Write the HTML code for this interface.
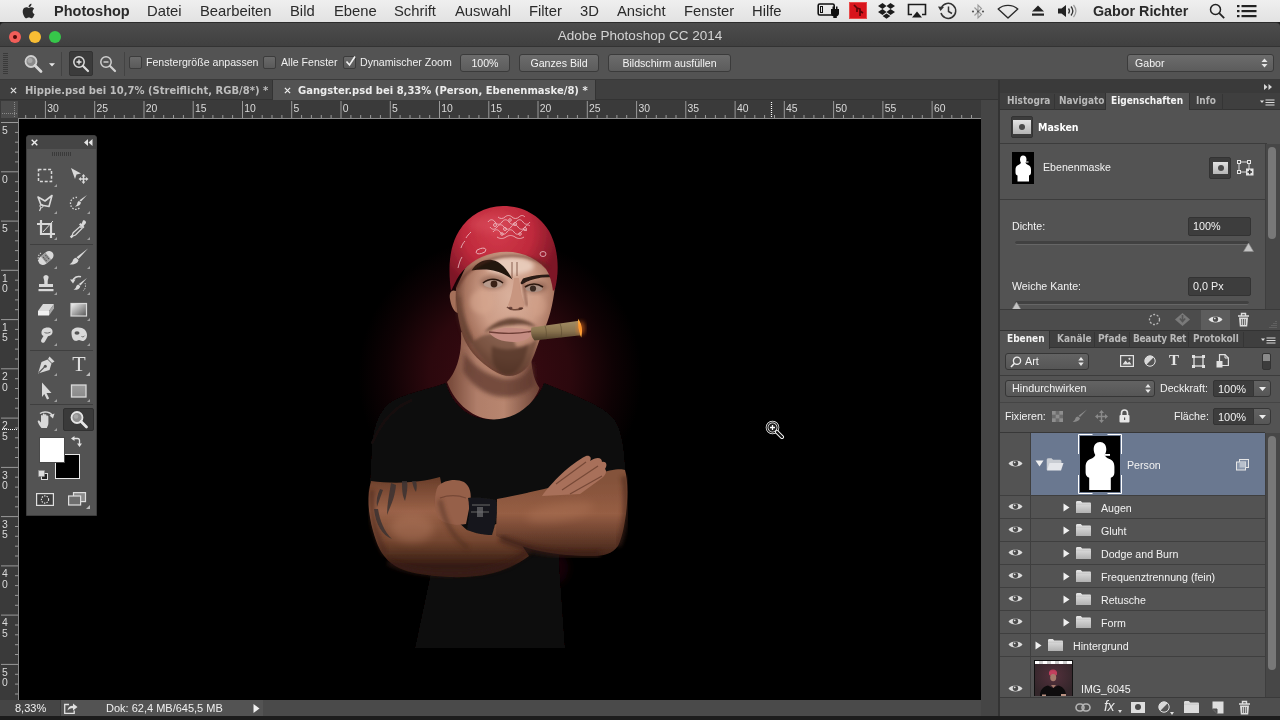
<!DOCTYPE html>
<html lang="de">
<head>
<meta charset="utf-8">
<title>Adobe Photoshop CC 2014</title>
<style>
*{box-sizing:border-box;margin:0;padding:0}
html,body{width:1280px;height:720px;overflow:hidden;background:#1b1b1b;font-family:"Liberation Sans","DejaVu Sans",sans-serif;color:#e6e6e6}
.abs{position:absolute}
#menubar,#titlebar,#optbar,#tabbar,#rulerT,#rulerL,#canvas,#status,#pcol{will-change:transform;transform:translateZ(0)}
#menubar{left:0;top:0;width:1280px;height:22px;background:linear-gradient(#efefef,#e2e2e2);color:#2a2a2a;font-size:14.8px;line-height:22px;white-space:nowrap}
#menubar span{position:absolute;top:0}
#titlebar{left:0;top:22px;width:1280px;height:25px;background:linear-gradient(#4c4c4c,#404040);border-top:1px solid #2c2c2c;border-bottom:1px solid #333;text-align:center;font-size:13.5px;line-height:26px;color:#d4d4d4;border-radius:4px 4px 0 0}
#optbar{left:0;top:47px;width:1280px;height:33px;background:#535353;border-bottom:1px solid #3a3a3a;font-size:10.6px;color:#f0f0f0}
#tabbar{left:0;top:80px;width:998px;height:20px;background:#3f3f3f;font-size:10px;font-weight:bold;font-family:"DejaVu Sans","Liberation Sans",sans-serif;color:#bdbdbd;white-space:nowrap}
#rulerT{left:0;top:100px;width:981px;height:19px;background:#3a3a3a}
#rulerL{left:0;top:119px;width:19px;height:581px;background:#3a3a3a}
#canvas{left:19px;top:119px;width:962px;height:581px;background:#000;overflow:hidden}
#vscroll{left:981px;top:100px;width:17px;height:616px;background:#454545}
#status{left:0;top:700px;width:981px;height:16px;background:#535353;font-size:11px;line-height:16px;color:#f0f0f0}
#pcol{left:998px;top:80px;width:282px;height:636px;background:#535353;border-left:2px solid #333}
#bottom{left:0;top:716px;width:1280px;height:4px;background:#1c1c1c}
.btn{position:absolute;height:18px;top:7px;border:1px solid #3b3b3b;border-radius:3px;background:linear-gradient(#6c6c6c,#5c5c5c);text-align:center;line-height:16px;font-size:10.6px;color:#f4f4f4}
.chk{position:absolute;top:9px;width:13px;height:13px;border:1px solid #3c3c3c;border-radius:2px;background:linear-gradient(#6a6a6a,#5a5a5a)}
.lbl{position:absolute;top:8px;line-height:15px;white-space:nowrap}

#pcol .tabs{position:absolute;left:0;width:280px;height:18px;background:#3f3f3f;border-bottom:1px solid #333;font:bold 10px "DejaVu Sans Condensed","DejaVu Sans","Liberation Sans",sans-serif;color:#b9b9b9;white-space:nowrap}
#pcol .tabs span{position:absolute;top:0;line-height:16px}
#pcol .tabs .act{position:absolute;top:0;height:18px;background:#535353;border-left:1px solid #333;border-right:1px solid #333}
#pcol .t{position:absolute;font-size:10.65px;line-height:13px;color:#f2f2f2;white-space:nowrap}
#pcol .fld{position:absolute;background:#3d3d3d;border:1px solid #333;border-radius:2px;font-size:10.8px;color:#f2f2f2;padding-left:4px;white-space:nowrap}
#pcol .hl{position:absolute;left:0;height:1px;background:#3c3c3c}
#pcol .dd{position:absolute;border:1px solid #363636;border-radius:3px;background:linear-gradient(#636363,#565656);font-size:10.8px;color:#f2f2f2;white-space:nowrap}
</style>
</head>
<body>
<svg width="0" height="0" style="position:absolute"><defs><linearGradient id="fg" x1="0" y1="0" x2="0" y2="1"><stop offset="0" stop-color="#e6e6e6"/><stop offset="1" stop-color="#b2b2b2"/></linearGradient></defs></svg>
<div id="menubar" class="abs">
<svg class="abs" style="left:20px;top:2px" width="18" height="18" viewBox="0 0 18 18"><path fill="#2b2b2b" d="M12.6 9.6c0-1.9 1.5-2.8 1.6-2.9-.9-1.3-2.2-1.4-2.7-1.5-1.2-.1-2.2.7-2.8.7-.6 0-1.5-.7-2.4-.6-1.200.1-2.400.7-3 1.800-1.300 2.200-.3 5.500.9 7.300.6.9 1.300 1.900 2.300 1.800.900 0 1.300-.6 2.400-.6 1.100 0 1.400.6 2.400.6 1 0 1.600-.9 2.200-1.800.7-1 1-2 1-2.100-.1 0-1.900-.7-1.900-2.700zM10.800 4c.5-.6.800-1.500.7-2.300-.7 0-1.600.5-2.100 1.100-.5.500-.9 1.400-.8 2.200.800.1 1.700-.4 2.200-1z"/></svg>
<span style="left:54px;font-weight:bold;font-size:14.5px">Photoshop</span>
<span style="left:147px">Datei</span><span style="left:200px">Bearbeiten</span><span style="left:290px">Bild</span><span style="left:334px">Ebene</span><span style="left:394px">Schrift</span><span style="left:455px">Auswahl</span><span style="left:529px">Filter</span><span style="left:580px">3D</span><span style="left:617px">Ansicht</span><span style="left:684px">Fenster</span><span style="left:752px">Hilfe</span>
<svg class="abs" style="left:817px;top:2px" width="24" height="18" viewBox="0 0 24 18"><rect x="1.200" y="2" width="16" height="11" rx="1.500" fill="none" stroke="#111" stroke-width="1.600"/><rect x="3.500" y="4.500" width="2" height="6" fill="none" stroke="#111" stroke-width="1"/><path fill="#111" d="M14 7h1.500V4.500h1.500V7h2V4.500h1.500V7H22v4.500c0 1.500-1 2.500-2.200 2.800V16h-3.500v-1.700C15 14 14 13 14 11.500z"/></svg>
<div class="abs" style="left:849px;top:2px;width:18px;height:17px;background:#d8141c;border:1px solid #e84a4a"></div>
<svg class="abs" style="left:849px;top:2px" width="18" height="17" viewBox="0 0 18 17"><path d="M5 3l3 3v4M8 6l3 1v7M11 9l3 2" stroke="#5c0508" stroke-width="1.700" fill="none"/></svg>
<svg class="abs" style="left:877px;top:2px" width="19" height="18" viewBox="0 0 19 18"><path fill="#1c1c1c" d="M5.500 1L1 4l4.500 3L9.500 4zM13.500 1L9.500 4l4 3L18 4zM1 10l4.500 3 4-3-4-3zM13.500 7l-4 3 4 3L18 10zM5.600 14l3.900 2.700 3.900-2.700-3.900-2.600z"/></svg>
<svg class="abs" style="left:907px;top:3px" width="20" height="16" viewBox="0 0 20 16"><path d="M5 11.500H1.500V1.500h17v10H15" fill="none" stroke="#1c1c1c" stroke-width="1.600"/><path d="M10 8.500l5 6H5z" fill="#1c1c1c"/></svg>
<svg class="abs" style="left:937px;top:1px" width="21" height="20" viewBox="0 0 21 20"><path d="M4.500 6.500A7.500 7.500 0 1 1 4 12" fill="none" stroke="#333" stroke-width="1.500"/><path d="M1 5.500l6 .5-3.500 4z" fill="#333"/><path d="M11.500 5.500v5l3.500 2" fill="none" stroke="#333" stroke-width="1.500"/></svg>
<svg class="abs" style="left:971px;top:3px" width="14" height="17" viewBox="0 0 14 17"><path d="M3.500 4.500l7 7-3.500 3.500V2l3.500 3.500-7 7" fill="none" stroke="#9a9a9a" stroke-width="1.100"/><circle cx="2" cy="8.500" r="1.100" fill="#555"/><circle cx="12" cy="8.500" r="1.100" fill="#555"/><circle cx="7" cy="8.500" r="1" fill="#555"/></svg>
<svg class="abs" style="left:997px;top:4px" width="22" height="15" viewBox="0 0 22 15"><path d="M1.200 5C6.500.2 15.500.2 20.800 5L11 14z" fill="none" stroke="#2a2a2a" stroke-width="1.400" stroke-linejoin="round"/></svg>
<svg class="abs" style="left:1031px;top:5px" width="14" height="12" viewBox="0 0 14 12"><path d="M7 .5l6 6H1z" fill="#222"/><rect x="1" y="8.500" width="12" height="2.200" fill="#222"/></svg>
<svg class="abs" style="left:1057px;top:4px" width="20" height="14" viewBox="0 0 20 14"><path d="M1 4.500h3.500L9 1v12L4.500 9.500H1z" fill="#222"/><path d="M11.500 4.500c1.200 1.500 1.200 3.500 0 5M14 2.500c2.200 2.700 2.200 6.300 0 9" fill="none" stroke="#333" stroke-width="1.300"/><path d="M16.500 1c3 3.700 3 8.300 0 12" fill="none" stroke="#999" stroke-width="1.200"/></svg>
<span style="left:1093px;font-weight:bold;font-size:14.300px">Gabor Richter</span>
<svg class="abs" style="left:1209px;top:3px" width="17" height="17" viewBox="0 0 17 17"><circle cx="6.500" cy="6.500" r="5" fill="none" stroke="#222" stroke-width="1.500"/><path d="M10.200 10.200l5 5" stroke="#222" stroke-width="1.800"/></svg>
<svg class="abs" style="left:1237px;top:5px" width="20" height="13" viewBox="0 0 20 13"><g fill="#222"><rect x="0" y="0" width="2.500" height="2.200"/><rect x="4.500" y="0" width="15" height="2.200"/><rect x="0" y="5" width="2.500" height="2.200"/><rect x="4.500" y="5" width="15" height="2.200"/><rect x="0" y="10" width="2.500" height="2.200"/><rect x="4.500" y="10" width="15" height="2.200"/></g></svg>
</div>
<div id="titlebar" class="abs">Adobe Photoshop CC 2014
<i class="abs" style="left:9px;top:8px;width:12px;height:12px;border-radius:6px;background:#f25e59"></i><i class="abs" style="left:13px;top:12px;width:4px;height:4px;border-radius:2px;background:#4a0a08"></i>
<i class="abs" style="left:29px;top:8px;width:12px;height:12px;border-radius:6px;background:#f8bd34"></i>
<i class="abs" style="left:49px;top:8px;width:12px;height:12px;border-radius:6px;background:#36c64a"></i>
</div>
<div id="optbar" class="abs">
<svg class="abs" style="left:3px;top:6px" width="6" height="22" viewBox="0 0 6 22"><g fill="#3a3a3a"><rect x="0" y="0" width="5" height="1"/><rect x="0" y="2" width="5" height="1"/><rect x="0" y="4" width="5" height="1"/><rect x="0" y="6" width="5" height="1"/><rect x="0" y="8" width="5" height="1"/><rect x="0" y="10" width="5" height="1"/><rect x="0" y="12" width="5" height="1"/><rect x="0" y="14" width="5" height="1"/><rect x="0" y="16" width="5" height="1"/><rect x="0" y="18" width="5" height="1"/><rect x="0" y="20" width="5" height="1"/></g></svg>
<svg class="abs" style="left:23px;top:7px" width="22" height="20" viewBox="0 0 22 20"><circle cx="8" cy="7.500" r="5.500" fill="#8a8a8a" stroke="#d0d0d0" stroke-width="1.800"/><circle cx="7" cy="6.500" r="2.500" fill="#a8a8a8"/><path d="M12 11.500l6 6" stroke="#d8d8d8" stroke-width="2.800" stroke-linecap="round"/></svg>
<svg class="abs" style="left:49px;top:16px" width="6" height="4" viewBox="0 0 8 5"><path d="M0 0h8L4 4.500z" fill="#e8e8e8"/></svg>
<i class="abs" style="left:61px;top:5px;width:1px;height:24px;background:#434343"></i>
<i class="abs" style="left:69px;top:4px;width:24px;height:25px;background:#3b3b3b;border-radius:2px;border:1px solid #333"></i>
<svg class="abs" style="left:72px;top:8px" width="18" height="18" viewBox="0 0 18 18"><circle cx="7" cy="7" r="5.200" fill="none" stroke="#dcdcdc" stroke-width="1.500"/><path d="M4.500 7h5M7 4.500v5" stroke="#e8e8e8" stroke-width="1.300"/><path d="M11 11l5 5" stroke="#dcdcdc" stroke-width="2.200" stroke-linecap="round"/></svg>
<svg class="abs" style="left:99px;top:8px" width="18" height="18" viewBox="0 0 18 18"><circle cx="7" cy="7" r="5.200" fill="none" stroke="#d0d0d0" stroke-width="1.500"/><path d="M4.500 7h5" stroke="#e0e0e0" stroke-width="1.300"/><path d="M11 11l5 5" stroke="#d0d0d0" stroke-width="2.200" stroke-linecap="round"/></svg>
<i class="abs" style="left:124px;top:5px;width:1px;height:24px;background:#434343"></i>
<i class="chk" style="left:129px"></i><span class="lbl" style="left:146px">Fenstergröße anpassen</span>
<i class="chk" style="left:263px"></i><span class="lbl" style="left:281px">Alle Fenster</span>
<i class="chk" style="left:343px"></i><svg class="abs" style="left:344px;top:8px" width="13" height="13" viewBox="0 0 13 13"><path d="M2.500 6.500l3 3.500L11 1.500" fill="none" stroke="#f2f2f2" stroke-width="1.600"/></svg><span class="lbl" style="left:360px">Dynamischer Zoom</span>
<div class="btn" style="left:460px;width:50px">100%</div>
<div class="btn" style="left:519px;width:80px">Ganzes Bild</div>
<div class="btn" style="left:608px;width:123px">Bildschirm ausfüllen</div>
<div class="btn" style="left:1127px;width:147px;text-align:left;padding-left:7px">Gabor</div>
<svg class="abs" style="left:1261px;top:11px" width="7" height="10" viewBox="0 0 7 10"><path d="M0.500 4L3.500 0.500 6.500 4zM0.500 6L3.500 9.500 6.500 6z" fill="#e6e6e6"/></svg>
</div>
<div id="tabbar" class="abs">
<i class="abs" style="left:272px;top:0;width:324px;height:20px;background:#535353;border-left:1px solid #333;border-right:1px solid #333"></i>
<i class="abs" style="left:0;top:19px;width:272px;height:1px;background:#333"></i><i class="abs" style="left:596px;top:19px;width:402px;height:1px;background:#333"></i>
<svg class="abs" style="left:10px;top:7px" width="7" height="7" viewBox="0 0 8 8"><path d="M1 1l6 6M7 1L1 7" stroke="#e0e0e0" stroke-width="1.400"/></svg>
<span class="abs" style="left:25px;top:1px;line-height:20px">Hippie.psd bei 10,7% (Streiflicht, RGB/8*) *</span>
<svg class="abs" style="left:284px;top:7px" width="7" height="7" viewBox="0 0 8 8"><path d="M1 1l6 6M7 1L1 7" stroke="#f0f0f0" stroke-width="1.400"/></svg>
<span class="abs" style="left:298px;top:1px;line-height:20px;color:#ececec">Gangster.psd bei 8,33% (Person, Ebenenmaske/8) *</span>
</div>
<div id="rulerT" class="abs"><svg class="abs" style="left:0;top:0" width="981" height="19" viewBox="0 0 981 19" font-family="Liberation Sans, sans-serif" font-size="10.400" fill="#dadada"><rect x="1" y="1" width="17" height="17" fill="#4d4d4d"/><path d="M14.500 2v16M2 13.500h16" stroke="#8a8a8a" stroke-width="1" stroke-dasharray="1 1"/><text x="47.2" y="12">30</text><text x="96.5" y="12">25</text><text x="145.8" y="12">20</text><text x="195.0" y="12">15</text><text x="244.3" y="12">10</text><text x="293.5" y="12">5</text><text x="342.8" y="12">0</text><text x="392.1" y="12">5</text><text x="441.3" y="12">10</text><text x="490.6" y="12">15</text><text x="539.8" y="12">20</text><text x="589.1" y="12">25</text><text x="638.4" y="12">30</text><text x="687.6" y="12">35</text><text x="736.9" y="12">40</text><text x="786.1" y="12">45</text><text x="835.4" y="12">50</text><text x="884.7" y="12">55</text><text x="933.9" y="12">60</text><path d="M25.7 15V18M35.6 15V18M45.4 1V18M55.3 15V18M65.1 15V18M75.0 15V18M84.8 15V18M94.7 1V18M104.6 15V18M114.4 15V18M124.3 15V18M134.1 15V18M144.0 1V18M153.8 15V18M163.7 15V18M173.5 15V18M183.4 15V18M193.2 1V18M203.1 15V18M212.9 15V18M222.8 15V18M232.6 15V18M242.5 1V18M252.3 15V18M262.2 15V18M272.0 15V18M281.9 15V18M291.7 1V18M301.6 15V18M311.4 15V18M321.3 15V18M331.1 15V18M341.0 1V18M350.9 15V18M360.7 15V18M370.6 15V18M380.4 15V18M390.3 1V18M400.1 15V18M410.0 15V18M419.8 15V18M429.7 15V18M439.5 1V18M449.4 15V18M459.2 15V18M469.1 15V18M478.9 15V18M488.8 1V18M498.6 15V18M508.5 15V18M518.3 15V18M528.2 15V18M538.0 1V18M547.9 15V18M557.7 15V18M567.6 15V18M577.4 15V18M587.3 1V18M597.2 15V18M607.0 15V18M616.9 15V18M626.7 15V18M636.6 1V18M646.4 15V18M656.3 15V18M666.1 15V18M676.0 15V18M685.8 1V18M695.7 15V18M705.5 15V18M715.4 15V18M725.2 15V18M735.1 1V18M744.9 15V18M754.8 15V18M764.6 15V18M774.5 15V18M784.3 1V18M794.2 15V18M804.0 15V18M813.9 15V18M823.7 15V18M833.6 1V18M843.5 15V18M853.3 15V18M863.2 15V18M873.0 15V18M882.9 1V18M892.7 15V18M902.6 15V18M912.4 15V18M922.3 15V18M932.1 1V18M942.0 15V18M951.8 15V18M961.7 15V18M971.5 15V18" stroke="#9a9a9a" stroke-width="1" fill="none"/><rect x="18" y="18" width="963" height="1" fill="#8a8a8a"/><path d="M771.500 2V18" stroke="#fff" stroke-width="1.200" stroke-dasharray="1 1"/></svg></div>
<div id="rulerL" class="abs"><svg class="abs" style="left:0;top:0" width="19" height="581" viewBox="0 0 19 581" font-family="Liberation Sans, sans-serif" font-size="10.400" fill="#dadada"><text x="2" y="14.8">5</text><text x="2" y="64.1">0</text><text x="2" y="113.4">5</text><text x="2" y="162.6">1</text><text x="2" y="173.1">0</text><text x="2" y="211.9">1</text><text x="2" y="222.4">5</text><text x="2" y="261.1">2</text><text x="2" y="271.6">0</text><text x="2" y="310.4">2</text><text x="2" y="320.9">5</text><text x="2" y="359.7">3</text><text x="2" y="370.2">0</text><text x="2" y="408.9">3</text><text x="2" y="419.4">5</text><text x="2" y="458.2">4</text><text x="2" y="468.7">0</text><text x="2" y="507.4">4</text><text x="2" y="517.9">5</text><text x="2" y="556.7">5</text><text x="2" y="567.2">0</text><path d="M1 3.5H19M15 13.4H19M15 23.2H19M15 33.1H19M15 42.9H19M1 52.8H19M15 62.7H19M15 72.5H19M15 82.4H19M15 92.2H19M1 102.1H19M15 111.9H19M15 121.8H19M15 131.6H19M15 141.5H19M1 151.3H19M15 161.2H19M15 171.0H19M15 180.9H19M15 190.7H19M1 200.6H19M15 210.4H19M15 220.3H19M15 230.1H19M15 240.0H19M1 249.8H19M15 259.7H19M15 269.5H19M15 279.4H19M15 289.2H19M1 299.1H19M15 309.0H19M15 318.8H19M15 328.7H19M15 338.5H19M1 348.4H19M15 358.2H19M15 368.1H19M15 377.9H19M15 387.8H19M1 397.6H19M15 407.5H19M15 417.3H19M15 427.2H19M15 437.0H19M1 446.9H19M15 456.7H19M15 466.6H19M15 476.4H19M15 486.3H19M1 496.1H19M15 506.0H19M15 515.8H19M15 525.7H19M15 535.5H19M1 545.4H19M15 555.3H19M15 565.1H19M15 575.0H19" stroke="#9a9a9a" stroke-width="1" fill="none"/><rect x="18" y="0" width="1" height="581" fill="#8a8a8a"/><path d="M2 310.5H18" stroke="#fff" stroke-width="1.200" stroke-dasharray="1 1"/></svg></div>
<div id="canvas" class="abs"><div class="abs" style="left:0;top:-1px;width:962px;height:582px">
<!--FIGSTART--><svg class="abs" style="left:0;top:0" width="962" height="582" viewBox="19 118 962 582">
<defs>
<radialGradient id="glow" gradientUnits="userSpaceOnUse" cx="500" cy="376" r="142" gradientTransform="translate(500 376) scale(1 .98) translate(-500 -376)"><stop offset="0" stop-color="#3c0b13"/><stop offset=".5" stop-color="#2b080d"/><stop offset=".8" stop-color="#0e0204"/><stop offset="1" stop-color="#000"/></radialGradient>
<radialGradient id="band" gradientUnits="userSpaceOnUse" cx="498" cy="232" r="62"><stop offset="0" stop-color="#d23a4b"/><stop offset=".55" stop-color="#bf2a3c"/><stop offset="1" stop-color="#7d1626"/></radialGradient>
<radialGradient id="face" gradientUnits="userSpaceOnUse" cx="510" cy="296" r="62" gradientTransform="translate(510 296) scale(.9 1.25) translate(-510 -296)"><stop offset="0" stop-color="#d9b09c"/><stop offset=".5" stop-color="#cc9c86"/><stop offset=".8" stop-color="#a87560"/><stop offset="1" stop-color="#6a4032"/></radialGradient>
<linearGradient id="neck" gradientUnits="userSpaceOnUse" x1="450" y1="0" x2="540" y2="0"><stop offset="0" stop-color="#7a4c3c"/><stop offset=".3" stop-color="#b07e6a"/><stop offset=".6" stop-color="#b8866f"/><stop offset="1" stop-color="#6a4034"/></linearGradient>
<linearGradient id="armL" gradientUnits="userSpaceOnUse" x1="0" y1="478" x2="0" y2="565"><stop offset="0" stop-color="#6a3e2a"/><stop offset=".38" stop-color="#9a6248"/><stop offset=".72" stop-color="#744630"/><stop offset="1" stop-color="#361c12"/></linearGradient>
<linearGradient id="armR" gradientUnits="userSpaceOnUse" x1="0" y1="480" x2="0" y2="560"><stop offset="0" stop-color="#84523a"/><stop offset=".42" stop-color="#965e44"/><stop offset="1" stop-color="#3a1e14"/></linearGradient>
<linearGradient id="cig" gradientUnits="userSpaceOnUse" x1="0" y1="322" x2="0" y2="340"><stop offset="0" stop-color="#a08a62"/><stop offset=".5" stop-color="#8a7450"/><stop offset="1" stop-color="#54432c"/></linearGradient>
<filter id="b15" x="-20%" y="-20%" width="140%" height="140%"><feGaussianBlur stdDeviation="1.600"/></filter><filter id="b1" x="-20%" y="-20%" width="140%" height="140%"><feGaussianBlur stdDeviation="1"/></filter>
<filter id="b2" x="-20%" y="-20%" width="140%" height="140%"><feGaussianBlur stdDeviation="2.200"/></filter>
<filter id="b4" x="-30%" y="-30%" width="160%" height="160%"><feGaussianBlur stdDeviation="4"/></filter>
<filter id="b05" x="-10%" y="-10%" width="120%" height="120%"><feGaussianBlur stdDeviation=".6"/></filter>
<clipPath id="bc"><path d="M451 291c-3-22-2-44 8-60 10-16 26-25 44-25 20 0 36 9 46 25 9 16 11 38 6 58l-2 2c-1-8-3-16-7-22-12-14-32-20-52-16-18 4-30 14-37 26-2 4-4 8-6 12z"/></clipPath></defs>
<rect x="19" y="118" width="962" height="582" fill="#000"/>
<ellipse cx="500" cy="376" rx="142" ry="139" fill="url(#glow)"/><ellipse cx="556" cy="568" rx="12" ry="16" fill="#2a060c" opacity=".55" filter="url(#b4)"/>
<!-- shirt -->
<g filter="url(#b05)">
<path d="M446 383c-14 5-36 9-52 17-14 8-20 24-22 44l-2 38c18 4 48 2 70-4l-8 90-17 80h150l-6-85 8-80c18 4 42 6 59 0-1-28-3-52-12-64-10-13-40-24-70-36-6 18-26 34-50 36s-42-14-48-36z" fill="#0b0909"/>
<path d="M372 444c8-20 20-36 40-44" stroke="#141010" stroke-width="3" fill="none"/>
</g>
<!-- neck -->
<g filter="url(#b05)">
<path d="M461 332C462 352 458 370 447 382C455 404 474 419.500 494 419.500C516 419.500 534 404 539.500 388C534 380 532 372 531 356Z" fill="url(#neck)"/>
<path d="M464 352c10 16 28 26 45 27 12 0 20-7 24-18l2 24c-8 8-18 12-30 12-18 0-34-12-42-26z" fill="#5a362a" opacity=".7" filter="url(#b2)"/>
</g>
<!-- left upper arm & forearm -->
<g filter="url(#b05)">
<path d="M371 481c-4 14-3 32 2 50 4 14 8 24 18 32 10 8 22 10 36 12 22 3 44 3 62-1 14-3 28-9 40-18l-22-34-40 8c-12-10-22-24-27-53-20 6-47 7-69 4z" fill="url(#armL)"/>
<path d="M497 499c30-6 68-14 100-25 12-4 24-6 28-4 3 10 3 28 1 44-2 14-4 24-8 32-6 8-14 10-26 10-34 0-68-6-96-20z" fill="url(#armR)"/>
<!-- right hand fingers on bicep -->
<path d="M542 496c10-14 28-32 44-40 4-1 6 2 4 5 6-4 12-4 12 1 4-1 6 3 3 7 2 2 1 6-3 9l-22 16z" fill="#a8705a"/>
<path d="M556 484l30-22M562 490l36-24M570 494l32-18" stroke="#6a3e2e" stroke-width="1.200" fill="none" opacity=".8"/>
<!-- left fist -->
<path d="M438 486c6-6 18-8 26-4 6 4 8 12 6 22l-4 20c-10 2-22 0-28-6-4-10-4-24 0-32z" fill="#96604a"/>
<path d="M440 498c8-3 18-3 26 0" stroke="#6a3e2e" stroke-width="1.200" fill="none" opacity=".7"/>
</g>
<!-- arm shading -->
<path d="M388 562c30 14 84 16 120 2l22-14" stroke="#3a1f16" stroke-width="6" fill="none" opacity=".6" filter="url(#b2)"/><path d="M372 490c-2 20 2 44 14 64" stroke="#4a281c" stroke-width="6" fill="none" opacity=".6" filter="url(#b2)"/><path d="M624 476c4 24 2 50-6 70" stroke="#4a281c" stroke-width="6" fill="none" opacity=".6" filter="url(#b2)"/>
<path d="M500 538c30 14 66 18 100 16" stroke="#3a1f16" stroke-width="7" fill="none" opacity=".65" filter="url(#b2)"/>
<path d="M440 500c4 22 14 38 28 48" stroke="#4a2a1e" stroke-width="4" fill="none" opacity=".6" filter="url(#b2)"/>
<ellipse cx="412" cy="528" rx="22" ry="14" fill="#b47a5e" opacity=".45" filter="url(#b4)"/><ellipse cx="560" cy="512" rx="34" ry="9" fill="#b07658" opacity=".4" filter="url(#b4)" transform="rotate(-10 560 512)"/>
<!-- tattoo -->
<g fill="#3a3230" opacity=".85" filter="url(#b05)" transform="translate(0 9)">
<path d="M391 474c-2 12-4 22-4 32 4-10 8-18 9-30z"/><path d="M402 472c0 8 0 14 3 20 2-8 3-14 2-20z"/><path d="M412 472c1 5 2 8 4 11 1-4 1-8 0-11z"/><path d="M380 480c-3 6-4 12-3 18 2-6 4-12 6-17z"/>
<path d="M374 500c2 16 8 26 18 30-8-8-12-18-14-30z"/>
</g>
<!-- watch band -->
<g filter="url(#b05)">
<path d="M468 498c8-1 20 0 28 2 2 10 0 24-4 35-8 0-18-2-25-5 2-10 3-22 1-32z" fill="#19181a"/>
<path d="M472 505h18M471 512h18" stroke="#4e4e52" stroke-width="1.500"/><rect x="477" y="507" width="6" height="10" fill="#6c6c70" opacity=".7"/>
</g>
<!-- ear -->
<path d="M456 291c-5-2-7 2-6 8 1 7 4 13 8 14z" fill="#a5705a" filter="url(#b05)"/>
<!-- face -->
<g filter="url(#b05)">
<path d="M456 288C455 300 458 318 461 330C465 345 474 356 484 364C494 372 502 376 509 376C518 376 526 370 531 362C536 352 538 342 543 332C549 320 553 305 555 286L556 262C540 246 500 244 468 262Z" fill="url(#face)"/>
</g>
<!-- forehead highlight -->
<ellipse cx="510" cy="266" rx="24" ry="9" fill="#ecd2c2" opacity=".85" filter="url(#b2)"/>
<ellipse cx="482" cy="302" rx="12" ry="12" fill="#d8a890" opacity=".55" filter="url(#b2)"/>
<ellipse cx="538" cy="306" rx="8" ry="10" fill="#d2a088" opacity=".5" filter="url(#b2)"/>
<!-- beard -->
<g filter="url(#b15)">
<path d="M459 300c1 14 4 26 8 36 6 12 14 22 24 30 8 6 14 9 20 9 8 0 14-5 19-13 4-8 6-16 8-24-6 6-14 9-22 9 0-6-6-10-12-12-10-3-22-1-30 6-6-8-11-22-15-41z" fill="#5c3c2e" opacity=".6"/>
<path d="M484 333c6-8 16-14 28-15 9 0 18 3 25 9-8-2-15-3-23-2-11 0-21 3-30 8z" fill="#5a382a" opacity=".85"/>
<path d="M492 346c6 3 14 4 22 3 6-1 10-2 14-5-1 10-4 18-9 24-4 5-8 7-12 7-5 0-10-4-13-10-2-5-3-12-2-19z" fill="#4a3024" opacity=".6"/>
</g>
<path d="M458 296c1 16 5 32 12 46" stroke="#5a3a2c" stroke-width="6" fill="none" opacity=".45" filter="url(#b2)"/>
<!-- lips -->
<path d="M489 332c8-3 16-5 23-4 8 0 15 1 21 3-1 6-8 11-19 11-12 0-22-4-25-10z" fill="#c48c82" filter="url(#b05)"/>
<path d="M489 332c14 2 30 2 44-1" stroke="#6e3e36" stroke-width="1.400" fill="none" filter="url(#b05)"/>
<!-- nose -->
<path d="M514 278c-1 10-3 20-6 27 2 4 8 6 14 4 3-2 3-6 1-9-2-7-3-15-4-22z" fill="#c89680" filter="url(#b05)"/>
<path d="M507 307c3 3 10 4 16 1" stroke="#5c3428" stroke-width="1.600" fill="none" opacity=".8" filter="url(#b05)"/><ellipse cx="510.500" cy="308" rx="2" ry="1.200" fill="#4a2820" opacity=".7" filter="url(#b05)"/><ellipse cx="520.500" cy="308.500" rx="2" ry="1.200" fill="#4a2820" opacity=".7" filter="url(#b05)"/>
<path d="M523 282c2 8 2 16 4 24" stroke="#7a4a3a" stroke-width="2.500" fill="none" opacity=".6" filter="url(#b1)"/>
<ellipse cx="493" cy="282" rx="13" ry="7" fill="#6a4234" opacity=".45" filter="url(#b2)"/><ellipse cx="535" cy="287" rx="12" ry="6" fill="#6a4234" opacity=".45" filter="url(#b2)"/>
<!-- eyes -->
<g filter="url(#b05)">
<ellipse cx="493" cy="284" rx="9.500" ry="4" fill="#b69a8c"/><circle cx="494" cy="284" r="3.400" fill="#3a2418"/>
<path d="M483 283c6-5 14-5 20 0" stroke="#2a1810" stroke-width="1.600" fill="none"/>
<ellipse cx="534" cy="288.500" rx="8.500" ry="3.600" fill="#a88e82"/><circle cx="533" cy="288.500" r="3.100" fill="#3a2a22"/>
<path d="M525 287c6-4 12-4 18 0" stroke="#2a1810" stroke-width="1.600" fill="none"/>
<!-- brows -->
<path d="M471.500 270.500c5-8 13-11.500 20.500-10.500 8.500 1.200 15 9 20.500 19.500-8-5.500-14.500-8.500-22-9.500-6.500-.8-12.500-.5-19 .5z" fill="#241610"/>
<path d="M522 283c8-5 18-7.500 29-7-8-.5-18 1-27 3.500z" fill="#2a1a12" stroke="#2a1a12" stroke-width="2.600" stroke-linejoin="round"/>
</g>
<path d="M512 262v16M517 262v14" stroke="#7a4c3c" stroke-width="1.200" opacity=".7" filter="url(#b05)"/>
<!-- cigar -->
<g filter="url(#b05)">
<path d="M531.500 327.500l47.500-6.800c2.200 4.200 3 9.500 2 14.500l-46.500 5.300c-3.200-3.500-4.200-8.500-3-13z" fill="url(#cig)"/><path d="M545 325.700c1.500 4 1.800 9 .8 13.500M560 323.500c1.800 4.500 2 9.500 1 14" stroke="#5e4c30" stroke-width="1" fill="none" opacity=".6"/>
<path d="M578.700 320.900c2.500 4.200 3.200 9.500 2.300 14.300-1.700-4.300-2.500-9.600-2.300-14.300z" fill="#ff9a28" stroke="#ffb040" stroke-width="1.300"/>
</g>
<ellipse cx="581" cy="328" rx="4" ry="7" fill="#ff8020" opacity=".5" filter="url(#b2)"/>
<!-- bandana -->
<g filter="url(#b05)">
<path d="M451 291c-3-22-2-44 8-60 10-16 26-25 44-25 20 0 36 9 46 25 9 16 11 38 6 58l-2 2c-1-8-3-16-7-22-12-14-32-20-52-16-18 4-30 14-37 26-2 4-4 8-6 12z" fill="url(#band)"/>
</g>
<path d="M457 288c6-14 18-24 38-30 18-5 40-2 54 10" stroke="#5a2a20" stroke-width="3" fill="none" opacity=".45" filter="url(#b1)"/>
<g clip-path="url(#bc)"><ellipse cx="492" cy="224" rx="24" ry="9" fill="#e05a68" opacity=".4" filter="url(#b4)"/></g>
<!-- bandana paisley -->
<g fill="none" stroke="#f4d4d8" stroke-width=".9" opacity=".8" filter="url(#b05)">
<path d="M488 222c2-3 5-3 7 0s5 3 7 0 5-3 7 0 5 3 7 0 5-3 7 0 5 3 7 0"/><path d="M490 227c2 3 5 3 7 0s5-3 7 0 5 3 7 0 5-3 7 0 5 3 7 0 4-2 5-1"/><path d="M493 232c2-3 5-3 7 0s5 3 7 0 5-3 7 0 5 3 7 0 4-3 6-1"/><path d="M498 217c2 2 5 2 7 0s5-2 7 0 5 2 7 0 4-2 6 0"/><path d="M497 237c3 2 6 2 9 0s6-2 9 0 6 2 9 0"/>
<circle cx="495" cy="225" r="1.500"/><circle cx="505" cy="229" r="1.500"/><circle cx="515" cy="224" r="1.500"/><circle cx="525" cy="229" r="1.500"/><circle cx="510" cy="220" r="1.300"/><circle cx="520" cy="234" r="1.300"/><circle cx="502" cy="234" r="1.300"/>
<ellipse cx="481" cy="251" rx="5" ry="2.500" transform="rotate(-15 481 251)"/><ellipse cx="543" cy="254" rx="3" ry="2.500"/><path d="M458 268c1-4 2-8 4-11M461 248c1-3 2-5 4-7M466 238c1-2 3-4 5-6"/>
</g>
</svg>
<!--FIGEND-->
<div class="abs" style="left:7px;top:17px;width:71px;height:381px;background:#535353;border:1px solid #3d3d3d;border-radius:3px 3px 0 0"></div>
<div class="abs" style="left:8px;top:18px;width:69px;height:13px;background:#454545;border-radius:2px 2px 0 0"></div>
<svg class="abs" style="left:12px;top:21px" width="7" height="7" viewBox="0 0 7 7"><path d="M.7.700l5.600 5.600M6.300.700L.7 6.300" stroke="#eee" stroke-width="1.400"/></svg>
<svg class="abs" style="left:65px;top:21px" width="9" height="7" viewBox="0 0 9 7"><path d="M4 0v7L0 3.500zM8.500 0v7l-4-3.500z" fill="#e4e4e4"/></svg>
<svg class="abs" style="left:33px;top:34px" width="20" height="4" viewBox="0 0 20 4"><path d="M.5 0v4M2.500 0v4M4.500 0v4M6.500 0v4M8.500 0v4M10.500 0v4M12.500 0v4M14.500 0v4M16.500 0v4M18.500 0v4" stroke="#3a3a3a" stroke-width="1"/></svg>
<svg class="abs" style="left:15.5px;top:47.0px" width="22" height="22" viewBox="0 0 22 22"><rect x="3.500" y="4.500" width="13" height="12" fill="none" stroke="#d9d9d9" stroke-width="1.500" stroke-dasharray="3 1.800"/><path d="M22 19V22H19z" fill="#a0a0a0"/></svg>
<svg class="abs" style="left:49.0px;top:47.0px" width="22" height="22" viewBox="0 0 22 22"><path d="M3 3l10 5.500-4.500 1L7 14z" fill="#d9d9d9"/><path d="M15.500 9l2 2.500h-1.300v1.800h1.800V12l2.500 2-2.500 2v-1.300h-1.800v1.800h1.300l-2 2.500-2-2.500h1.300v-1.800h-1.800V16l-2.500-2 2.500-2v1.300h1.800v-1.800h-1.300z" fill="#d9d9d9"/></svg>
<svg class="abs" style="left:15.5px;top:74.0px" width="22" height="22" viewBox="0 0 22 22"><path d="M3 5l7 4 7-5.500-3 11-8-1.500z" fill="none" stroke="#d9d9d9" stroke-width="1.600" stroke-linejoin="round"/><circle cx="6.500" cy="14" r="1.600" fill="none" stroke="#d9d9d9" stroke-width="1"/><path d="M6 15.500l-1.500 3.500" stroke="#d9d9d9" stroke-width="1.200"/><path d="M22 19V22H19z" fill="#a0a0a0"/></svg>
<svg class="abs" style="left:49.0px;top:74.0px" width="22" height="22" viewBox="0 0 22 22"><path d="M9 5.500a5.500 6 0 1 0 3 10" fill="none" stroke="#d9d9d9" stroke-width="1.300" stroke-dasharray="1.500 1.500"/><path d="M19 3l-6 6.500-1.500-1.200z" fill="#d9d9d9"/><path d="M11 9l2 1.600c-.3 2.500-2.500 4-6 3.800 1.600-.9 2-1.900 2.300-3.200.2-1 1-2 1.700-2.200z" fill="#d9d9d9"/><path d="M22 19V22H19z" fill="#a0a0a0"/></svg>
<svg class="abs" style="left:15.5px;top:100.0px" width="22" height="22" viewBox="0 0 22 22"><path d="M6 2v14h14M2 6h14v14" fill="none" stroke="#d9d9d9" stroke-width="2.200"/><path d="M8 14L18 3" stroke="#d9d9d9" stroke-width="1"/><path d="M22 19V22H19z" fill="#a0a0a0"/></svg>
<svg class="abs" style="left:49.0px;top:100.0px" width="22" height="22" viewBox="0 0 22 22"><path d="M15 2.500c1.500-1 3.800 1.200 2.800 2.800l-2.300 2.700 1 1-1.500 1.500-4-4L12.500 5l1 1z" fill="#d9d9d9"/><path d="M12 8.500l2 2-6.500 6.500-2.500 1-1.500 1.500-.8-.8L4.200 17.200l1-2.500z" fill="none" stroke="#d9d9d9" stroke-width="1.200"/><path d="M22 19V22H19z" fill="#a0a0a0"/></svg>
<i class="abs" style="left:11px;top:126px;width:63px;height:1px;background:#3f3f3f"></i>
<svg class="abs" style="left:15.5px;top:129.0px" width="22" height="22" viewBox="0 0 22 22"><g transform="rotate(-40 11 11)"><rect x="2.500" y="6.500" width="17" height="9" rx="4.500" fill="#d9d9d9"/><rect x="8" y="6.500" width="6" height="9" fill="#9a9a9a"/><g fill="#555"><circle cx="9.500" cy="9" r=".7"/><circle cx="12.500" cy="9" r=".7"/><circle cx="9.500" cy="11" r=".7"/><circle cx="12.500" cy="11" r=".7"/><circle cx="9.500" cy="13" r=".7"/><circle cx="12.500" cy="13" r=".7"/></g></g><path d="M6 6a5 6 0 0 0-1 10" fill="none" stroke="#d9d9d9" stroke-width="1.100" stroke-dasharray="1.300 1.300"/><path d="M22 19V22H19z" fill="#a0a0a0"/></svg>
<svg class="abs" style="left:49.0px;top:129.0px" width="22" height="22" viewBox="0 0 22 22"><path d="M20 1.500L10.500 12l-2-1.700z" fill="#d9d9d9"/><path d="M8 10.800l2.500 2.200c-.6 3.200-4.200 5-9 4.400 2.400-1.200 3-2.600 3.500-4.300.4-1.300 1.800-2.300 3-2.300z" fill="#d9d9d9"/><path d="M22 19V22H19z" fill="#a0a0a0"/></svg>
<svg class="abs" style="left:15.5px;top:155.0px" width="22" height="22" viewBox="0 0 22 22"><path d="M8.500 3.500a2.800 2.800 0 0 1 5 0c.5 1.200-.8 3-.8 5v2.500h5.300v3H4v-3h5.300V8.500c0-2-1.300-3.800-.8-5z" fill="#d9d9d9"/><rect x="3.500" y="16" width="15" height="2.200" fill="#d9d9d9"/><path d="M22 19V22H19z" fill="#a0a0a0"/></svg>
<svg class="abs" style="left:49.0px;top:155.0px" width="22" height="22" viewBox="0 0 22 22"><path d="M19 5l-6.500 7.500-1.700-1.400z" fill="#d9d9d9"/><path d="M10.300 11.500l2 1.700c-.4 2.600-3 4-6.800 3.600 1.800-1 2.300-2 2.700-3.300.3-1 1.300-1.900 2.100-2z" fill="#d9d9d9"/><path d="M4.500 8.500A6.500 6.500 0 0 1 13 3.800" fill="none" stroke="#d9d9d9" stroke-width="1.500"/><path d="M2 6.500l3 4 2.500-4z" fill="#d9d9d9"/><path d="M17 10a7 7 0 0 1-2 8" fill="none" stroke="#d9d9d9" stroke-width="1" stroke-dasharray="1.300 1.300"/><path d="M22 19V22H19z" fill="#a0a0a0"/></svg>
<svg class="abs" style="left:15.5px;top:181.0px" width="22" height="22" viewBox="0 0 22 22"><path d="M8 5h11l-5 7H3z" fill="#d9d9d9"/><path d="M3 12h11v4.500H3z" fill="#f0f0f0"/><path d="M14 12l5-7v4.500l-5 7z" fill="#a8a8a8"/><path d="M22 19V22H19z" fill="#a0a0a0"/></svg>
<svg class="abs" style="left:49.0px;top:181.0px" width="22" height="22" viewBox="0 0 22 22"><defs><linearGradient id="gr1" x1="0" y1="0" x2="1" y2="1"><stop offset="0" stop-color="#f4f4f4"/><stop offset="1" stop-color="#555"/></linearGradient></defs><rect x="3" y="4.500" width="15.500" height="12.500" fill="url(#gr1)" stroke="#d9d9d9" stroke-width="1.200"/><path d="M22 19V22H19z" fill="#a0a0a0"/></svg>
<svg class="abs" style="left:15.5px;top:206.0px" width="22" height="22" viewBox="0 0 22 22"><path d="M6.500 9.500C6 5.500 9 3.500 12.500 3.500c3.500 0 5.500 2 5 5-.4 2.200-2 3.500-4.500 3.700L10 17.500c-.6 1.200-2 1.600-3 1s-1.200-1.800-.6-3L8.500 12c-1.200-.4-1.900-1.300-2-2.500z" fill="#d9d9d9"/><path d="M9.500 8.500c1.500.8 4 .8 6-.3" stroke="#666" stroke-width="1" fill="none"/><path d="M22 19V22H19z" fill="#a0a0a0"/></svg>
<svg class="abs" style="left:49.0px;top:206.0px" width="22" height="22" viewBox="0 0 22 22"><path d="M3.500 8.500c0-3 3-5 7-5 5 0 8.500 3 8.500 7.500 0 3.500-2 6-4.500 6-1.500 0-2.200-1-3.500-1s-2 1.300-3.800.8C4.500 16 3.500 12.500 3.500 8.500z" fill="#d9d9d9"/><ellipse cx="9" cy="9" rx="2.500" ry="1.800" fill="#555"/><path d="M13.500 12.500c1.200.6 2.500.3 3.200-.8" stroke="#666" stroke-width="1" fill="none"/><path d="M22 19V22H19z" fill="#a0a0a0"/></svg>
<i class="abs" style="left:11px;top:232px;width:63px;height:1px;background:#3f3f3f"></i>
<svg class="abs" style="left:15.5px;top:236.0px" width="22" height="22" viewBox="0 0 22 22"><path d="M14.500 2.500l5 5-2.500 1.500-4-4z" fill="#d9d9d9"/><path d="M12.500 5.500l4 4-2 6.500L3 19.500l3.500-11.500z" fill="#d9d9d9"/><path d="M3.500 19l6-6" stroke="#555" stroke-width="1.100"/><circle cx="10.300" cy="12.200" r="1.500" fill="#555"/><path d="M22 19V22H19z" fill="#a0a0a0"/></svg>
<span class="abs" style="left:51px;top:234px;width:18px;text-align:center;font:22px 'Liberation Serif',serif;color:#dedede;line-height:24px">T</span>
<svg class="abs" style="left:67px;top:254px" width="4" height="4" viewBox="0 0 4 4"><path d="M4 0V4H0z" fill="#bdbdbd"/></svg>
<svg class="abs" style="left:15.5px;top:262.0px" width="22" height="22" viewBox="0 0 22 22"><path d="M7 2.500l9.500 10.500h-5l2.700 5.500-2.200 1-2.700-5.500L7 17z" fill="#d9d9d9"/><path d="M22 19V22H19z" fill="#a0a0a0"/></svg>
<svg class="abs" style="left:49.0px;top:262.0px" width="22" height="22" viewBox="0 0 22 22"><defs><linearGradient id="gr2" x1="0" y1="0" x2="0" y2="1"><stop offset="0" stop-color="#9a9a9a"/><stop offset="1" stop-color="#8a8a8a"/></linearGradient></defs><rect x="3.500" y="5" width="14.500" height="12" fill="url(#gr2)" stroke="#d9d9d9" stroke-width="1.300"/><path d="M22 19V22H19z" fill="#a0a0a0"/></svg>
<i class="abs" style="left:11px;top:286px;width:63px;height:1px;background:#3f3f3f"></i>
<i class="abs" style="left:44px;top:290px;width:31px;height:23px;background:#3a3a3a;border-radius:2px;border:1px solid #303030"></i>
<svg class="abs" style="left:15.5px;top:291.0px" width="22" height="22" viewBox="0 0 22 22"><path d="M6.500 19c-2-2.500-3.500-5-3.800-6.500-.2-1 1-1.500 1.700-.7L6 13.500V6.800c0-1.200 1.700-1.200 1.800 0V5.500c0-1.300 1.800-1.300 1.900 0v.7c0-1.300 1.800-1.300 1.900 0v1.300c0-1.200 1.700-1.200 1.800 0V14c0 2-1 3.500-1.500 5z" fill="#d9d9d9"/><path d="M5 4.500A7.500 5.500 0 0 1 17.500 7" fill="none" stroke="#d9d9d9" stroke-width="1.500"/><path d="M19.500 4.500L18 9.500l-3.500-3z" fill="#d9d9d9"/><path d="M22 19V22H19z" fill="#a0a0a0"/></svg>
<svg class="abs" style="left:49.0px;top:291.0px" width="22" height="22" viewBox="0 0 22 22"><circle cx="9" cy="8.500" r="5.500" fill="#8e8e8e" stroke="#e6e6e6" stroke-width="1.800"/><circle cx="8" cy="7.500" r="2.300" fill="#a8a8a8"/><path d="M13 12.500l5.500 5.500" stroke="#e6e6e6" stroke-width="2.800" stroke-linecap="round"/></svg>
<i class="abs" style="left:35.5px;top:335.5px;width:25px;height:25px;background:#000;border:1px solid #e8e8e8"></i>
<i class="abs" style="left:20px;top:319px;width:26px;height:26px;background:#fff;border:1px solid #4a4a4a"></i>
<svg class="abs" style="left:52px;top:318px" width="11" height="11" viewBox="0 0 11 11"><path d="M3 2.500h3.500a2 2 0 0 1 2 2V8" fill="none" stroke="#e2e2e2" stroke-width="1.300"/><path d="M3.500 0v5L0 2.500zM6 7.500h5L8.500 11z" fill="#e2e2e2"/></svg>
<svg class="abs" style="left:19px;top:352px" width="10" height="10" viewBox="0 0 10 10"><rect x="3.500" y="3.500" width="6" height="6" fill="#222" stroke="#ddd" stroke-width="1"/><rect x=".5" y=".5" width="6" height="6" fill="#ddd" stroke="#888" stroke-width=".6"/></svg>
<svg class="abs" style="left:17px;top:375px" width="18" height="13" viewBox="0 0 18 13"><rect x=".6" y=".6" width="16.800" height="11.800" fill="#3e3e3e" stroke="#dedede" stroke-width="1.200"/><circle cx="9" cy="6.500" r="3.600" fill="none" stroke="#e6e6e6" stroke-width="1.100" stroke-dasharray="1.400 1.200"/></svg>
<svg class="abs" style="left:49px;top:374px" width="22" height="17" viewBox="0 0 22 17"><rect x="5.500" y=".6" width="12" height="9" fill="#8a8a8a" stroke="#dedede" stroke-width="1.200"/><rect x=".6" y="4" width="12" height="9" fill="#6e6e6e" stroke="#dedede" stroke-width="1.200"/><path d="M22 13v4h-4z" fill="#bdbdbd"/></svg>
<svg class="abs" style="left:746px;top:302px" width="20" height="20" viewBox="0 0 20 20"><circle cx="7.500" cy="7.500" r="5.500" fill="#3a3a3a" fill-opacity=".5" stroke="#fff" stroke-width="2.600"/><circle cx="7.500" cy="7.500" r="5.500" fill="none" stroke="#111" stroke-width="1.200"/><path d="M12 12l5 5" stroke="#fff" stroke-width="4" stroke-linecap="round"/><path d="M12 12l5 5" stroke="#111" stroke-width="2.200" stroke-linecap="round"/><path d="M5 7.500h5M7.500 5v5" stroke="#fff" stroke-width="1.300"/></svg>
</div></div>
<div id="vscroll" class="abs"></div>
<div id="status" class="abs">
<i class="abs" style="left:0;top:0;width:61px;height:16px;background:#454545;border-right:1px solid #3a3a3a"></i>
<span class="abs" style="left:15px;top:0">8,33%</span>
<svg class="abs" style="left:64px;top:2px" width="14" height="12" viewBox="0 0 14 12"><path d="M5 2.500H.7v8.800h9.500V8.500" fill="none" stroke="#e0e0e0" stroke-width="1.300"/><path d="M3.500 8.500c.3-3 2.200-4.700 5.500-4.700V1.500L13.500 5 9 8.500V6.300c-2.500 0-4 .5-5.500 2.200z" fill="#e0e0e0"/></svg>
<span class="abs" style="left:106px;top:0">Dok: 62,4 MB/645,5 MB</span>
<svg class="abs" style="left:253px;top:4px" width="7" height="9" viewBox="0 0 7 9"><path d="M.5 0l6 4.500-6 4.500z" fill="#f0f0f0"/></svg>
<i class="abs" style="left:263px;top:0;width:718px;height:16px;background:#4a4a4a"></i>
</div>
<div id="pcol" class="abs">
<i class="abs" style="left:0;top:0;width:280px;height:13px;background:#3a3a3a"></i>
<svg class="abs" style="left:264px;top:4px" width="9" height="6" viewBox="0 0 9 6"><path d="M0 0l3.500 3L0 6zM4.500 0L8 3 4.500 6z" fill="#d8d8d8"/></svg>
<div class="tabs" style="top:13px;height:17px">
<i class="abs" style="left:54px;top:1px;width:1px;height:16px;background:#353535"></i>
<i class="act" style="left:105px;width:85px;height:17px"></i>
<i class="abs" style="left:222px;top:1px;width:1px;height:16px;background:#353535"></i>
<span style="left:7px">Histogra</span><span style="left:59px">Navigato</span><span style="left:111px;color:#f4f4f4">Eigenschaften</span><span style="left:196px">Info</span>
<svg class="abs" style="left:260px;top:6px" width="15" height="8" viewBox="0 0 15 8"><path d="M0 1.500h4L2 4z" fill="#ddd"/><path d="M5.500 1h9M5.500 3.500h9M5.500 6h9" stroke="#ddd" stroke-width="1.200"/></svg>
</div>
<!-- Masken header -->
<i class="abs" style="left:11px;top:36px;width:22px;height:22px;background:#3c3c3c;border-radius:2px;border:1px solid #333"></i>
<i class="abs" style="left:13px;top:40px;width:18px;height:14px;background:linear-gradient(#e4e4e4,#b4b4b4)"></i>
<i class="abs" style="left:19px;top:44px;width:6px;height:6px;border-radius:3px;background:#4a4a4a"></i>
<span class="t" style="left:38px;top:41px;font:bold 10.5px 'DejaVu Sans Condensed','Liberation Sans',sans-serif;color:#fff">Masken</span>
<i class="hl" style="top:63px;width:267px"></i>
<!-- Ebenenmaske -->
<svg class="abs" style="left:12px;top:72px" width="22" height="32" viewBox="0 0 22 32"><rect width="22" height="32" fill="#000"/><path d="M11 3.500c2.200 0 3.500 1.600 3.500 4 0 1.200-.3 2.300-.9 3.200.4 1 1.200 1.700 2.600 2.300 2 .8 2.800 2.200 2.800 4.500v3c0 1.500-.6 2.500-2 3v6H5.500v-6c-1.400-.5-2-1.500-2-3v-3c0-2.300.8-3.700 2.800-4.500 1.400-.6 2.200-1.300 2.600-2.300-.6-.9-.9-2-.9-3.200 0-2.400 1.300-4 3-4z" fill="#fff"/><rect x="14" y="9.500" width="2.500" height="1" fill="#fff"/></svg>
<span class="t" style="left:43px;top:81px">Ebenenmaske</span>
<i class="abs" style="left:209px;top:77px;width:22px;height:22px;background:#3c3c3c;border-radius:2px;border:1px solid #333"></i>
<i class="abs" style="left:213px;top:82px;width:15px;height:12px;background:linear-gradient(#e2e2e2,#b6b6b6)"></i>
<i class="abs" style="left:218px;top:85px;width:6px;height:6px;border-radius:3px;background:#4a4a4a"></i>
<svg class="abs" style="left:237px;top:80px" width="17" height="16" viewBox="0 0 17 16"><rect x="2" y="2" width="10" height="10" fill="none" stroke="#dcdcdc" stroke-width="1"/><g fill="#535353" stroke="#e6e6e6" stroke-width="1"><rect x=".5" y=".5" width="3" height="3"/><rect x="10.500" y=".5" width="3" height="3"/><rect x=".5" y="10.500" width="3" height="3"/></g><rect x="9" y="8.500" width="7.500" height="7" fill="#e6e6e6"/><path d="M12.750 9.800v4.400M10.500 12h4.500" stroke="#333" stroke-width="1.400"/></svg>
<i class="hl" style="top:119px;width:267px"></i>
<!-- Dichte -->
<span class="t" style="left:12px;top:140px">Dichte:</span>
<div class="fld" style="left:188px;top:137px;width:63px;height:19px;line-height:17px">100%</div>
<i class="abs" style="left:15px;top:161px;width:234px;height:4px;border-radius:2px;background:#414141;border-bottom:1px solid #666"></i>
<svg class="abs" style="left:243px;top:163px" width="11" height="9" viewBox="0 0 11 9"><path d="M5.500 0L10.500 8.500H.5z" fill="#c4c4c4" stroke="#8a8a8a" stroke-width=".6"/></svg>
<!-- Weiche Kante -->
<span class="t" style="left:12px;top:200px">Weiche Kante:</span>
<div class="fld" style="left:188px;top:197px;width:63px;height:19px;line-height:17px">0,0 Px</div>
<i class="abs" style="left:15px;top:221px;width:234px;height:4px;border-radius:2px;background:#414141;border-bottom:1px solid #666"></i>
<svg class="abs" style="left:11px;top:222px" width="11" height="7" viewBox="0 0 11 7"><path d="M5.500 0L10.500 8.500H.5z" fill="#c4c4c4" stroke="#8a8a8a" stroke-width=".6"/></svg>
<!-- scrollbar -->
<i class="abs" style="left:265px;top:64px;width:15px;height:165px;background:#474747;border-left:1px solid #3e3e3e"></i>
<i class="abs" style="left:268px;top:67px;width:8px;height:92px;border-radius:4px;background:#787878"></i>
<!-- bottom bar -->
<i class="abs" style="left:0;top:229px;width:280px;height:21px;background:#4c4c4c;border-top:1px solid #3a3a3a"></i>
<i class="abs" style="left:201px;top:230px;width:29px;height:20px;background:#5d5d5d"></i>
<svg class="abs" style="left:148px;top:233px" width="13" height="13" viewBox="0 0 13 13"><circle cx="6.500" cy="6.500" r="5" fill="none" stroke="#b8b8b8" stroke-width="1.300" stroke-dasharray="2 1.600"/></svg>
<svg class="abs" style="left:174px;top:232px" width="17" height="15" viewBox="0 0 17 15"><path d="M8.500 1L16 7.500 8.500 14 1 7.500z" fill="#7a7a7a"/><path d="M8.500 3v5.500M5.800 6.500l2.700 3 2.700-3" stroke="#555" stroke-width="1.600" fill="none"/></svg>
<svg class="abs" style="left:208px;top:234px" width="15" height="11" viewBox="0 0 15 11"><path d="M.5 5.500C3 1.500 12 1.500 14.500 5.500 12 9.500 3 9.500.5 5.500z" fill="#e4e4e4"/><circle cx="7.500" cy="5.200" r="2.600" fill="#4a4a4a"/><circle cx="6.800" cy="4.400" r=".9" fill="#ddd"/></svg>
<svg class="abs" style="left:237px;top:232px" width="13" height="15" viewBox="0 0 13 15"><path d="M1 4h11M4.500 3.500V1.500h4v2" stroke="#dedede" stroke-width="1.400" fill="none"/><path d="M2 5.500h9l-.8 9H2.800z" fill="#dedede"/><path d="M4.700 7v6M6.500 7v6M8.300 7v6" stroke="#555" stroke-width=".9"/></svg>
<svg class="abs" style="left:268px;top:240px" width="9" height="9" viewBox="0 0 9 9"><path d="M8 1v1M6 3v1M8 3v1M4 5v1M6 5v1M8 5v1M2 7v1M4 7v1M6 7v1M8 7v1" stroke="#777" stroke-width="1"/></svg>
<div class="tabs" style="top:250px;border-top:1px solid #333;height:18px">
<i class="act" style="left:-1px;width:51px;height:18px"></i>
<i class="abs" style="left:94px;top:1px;width:1px;height:16px;background:#353535"></i><i class="abs" style="left:129px;top:1px;width:1px;height:16px;background:#353535"></i><i class="abs" style="left:188px;top:1px;width:1px;height:16px;background:#353535"></i><i class="abs" style="left:243px;top:1px;width:1px;height:16px;background:#353535"></i>
<span style="left:7px;color:#f4f4f4">Ebenen</span><span style="left:57px">Kanäle</span><span style="left:98px">Pfade</span><span style="left:133px;width:54px;overflow:hidden;letter-spacing:-.3px">Beauty Ret</span><span style="left:193px">Protokoll</span>
<svg class="abs" style="left:261px;top:6px" width="15" height="8" viewBox="0 0 15 8"><path d="M0 1.500h4L2 4z" fill="#ddd"/><path d="M5.500 1h9M5.500 3.500h9M5.500 6h9" stroke="#ddd" stroke-width="1.200"/></svg>
</div>
<div class="dd" style="left:5px;top:273px;width:84px;height:17px;line-height:15px;padding-left:19px">Art</div>
<svg class="abs" style="left:10px;top:276px" width="12" height="12" viewBox="0 0 12 12"><circle cx="7" cy="4.800" r="3.600" fill="none" stroke="#eee" stroke-width="1.300"/><path d="M4.300 7.500L1 11" stroke="#eee" stroke-width="1.600"/></svg>
<svg class="abs" style="left:78px;top:276px" width="6" height="11" viewBox="0 0 6 11"><path d="M.3 4.500L3 1l2.700 3.500zM.3 6.500L3 10l2.700-3.500z" fill="#e8e8e8"/></svg>
<svg class="abs" style="left:120px;top:275px" width="14" height="12" viewBox="0 0 14 12"><rect x=".6" y=".6" width="12.800" height="10.800" fill="none" stroke="#e2e2e2" stroke-width="1.200"/><path d="M2.500 9.500l3-4 2.200 2.500 1.500-1.500 2.300 3z" fill="#e2e2e2"/><circle cx="9.500" cy="3.800" r="1.100" fill="#e2e2e2"/></svg>
<svg class="abs" style="left:144px;top:275px" width="12" height="12" viewBox="0 0 12 12"><circle cx="6" cy="6" r="5.200" fill="#d8d8d8"/><path d="M9.700 2.300A5.200 5.200 0 0 1 2.300 9.700z" fill="#555"/><circle cx="6" cy="6" r="5.200" fill="none" stroke="#e0e0e0" stroke-width="1"/></svg>
<span class="abs" style="left:169px;top:271px;font:bold 15px 'Liberation Serif',serif;color:#e6e6e6;line-height:18px">T</span>
<svg class="abs" style="left:192px;top:275px" width="13" height="13" viewBox="0 0 13 13"><rect x="2" y="2" width="9" height="9" fill="none" stroke="#e2e2e2" stroke-width="1.300"/><g fill="#e2e2e2"><rect x="0" y="0" width="3" height="3"/><rect x="10" y="0" width="3" height="3"/><rect x="0" y="10" width="3" height="3"/><rect x="10" y="10" width="3" height="3"/></g></svg>
<svg class="abs" style="left:216px;top:274px" width="13" height="14" viewBox="0 0 13 14"><path d="M3.500.6h5.500l3.400 3.400v7.500H3.500z" fill="none" stroke="#e2e2e2" stroke-width="1.200"/><path d="M9 .6v3.400h3.400" fill="none" stroke="#e2e2e2" stroke-width="1"/><rect x=".5" y="7" width="6" height="6.500" fill="#e2e2e2"/></svg>
<i class="abs" style="left:262px;top:273px;width:9px;height:17px;border:1px solid #333;border-radius:2px;background:linear-gradient(#8a8a8a 0,#8a8a8a 45%,#3c3c3c 45%)"></i>
<i class="hl" style="top:295px;width:280px"></i>
<div class="dd" style="left:5px;top:300px;width:150px;height:17px;line-height:15px;padding-left:6px">Hindurchwirken</div>
<svg class="abs" style="left:145px;top:303px" width="6" height="11" viewBox="0 0 6 11"><path d="M.3 4.500L3 1l2.700 3.500zM.3 6.500L3 10l2.700-3.500z" fill="#e8e8e8"/></svg>
<span class="t" style="left:160px;top:302px">Deckkraft:</span>
<div class="fld" style="left:213px;top:300px;width:41px;height:17px;line-height:16px;font-size:11px;border-radius:2px 0 0 2px">100%</div>
<div class="dd" style="left:253px;top:300px;width:18px;height:17px;border-radius:0 3px 3px 0"></div>
<svg class="abs" style="left:259px;top:307px" width="7" height="4" viewBox="0 0 7 4"><path d="M0 0h7L3.500 4z" fill="#eee"/></svg>
<i class="hl" style="top:322px;width:280px;background:#454545"></i>
<span class="t" style="left:5px;top:330px">Fixieren:</span>
<svg class="abs" style="left:52px;top:331px" width="11" height="11" viewBox="0 0 11 11"><rect width="11" height="11" fill="#6c6c6c"/><g fill="#8e8e8e"><rect x="0" y="0" width="3.700" height="3.700"/><rect x="7.300" y="0" width="3.700" height="3.700"/><rect x="3.700" y="3.700" width="3.700" height="3.700"/><rect x="0" y="7.300" width="3.700" height="3.700"/><rect x="7.300" y="7.300" width="3.700" height="3.700"/></g></svg>
<svg class="abs" style="left:72px;top:329px" width="16" height="14" viewBox="0 0 16 14"><path d="M15 .5L8 8l-1.500-1.300z" fill="#8a8a8a"/><path d="M6 7.500l2 1.800c-.5 2.500-3.500 4-7.500 3.500 2-1 2.500-2 3-3.500.3-1 1.500-1.800 2.500-1.800z" fill="#8a8a8a"/></svg>
<svg class="abs" style="left:95px;top:330px" width="13" height="13" viewBox="0 0 13 13"><path d="M6.500 0L9 3H7.200v2.800H10V4l3 2.500L10 9V7.200H7.200V10H9l-2.500 3L4 10h1.800V7.200H3V9L0 6.500 3 4v1.800h2.800V3H4z" fill="#8a8a8a"/></svg>
<svg class="abs" style="left:119px;top:329px" width="11" height="14" viewBox="0 0 11 14"><path d="M2.500 6.500V4a3 3 0 0 1 6 0v2.500" fill="none" stroke="#e6e6e6" stroke-width="1.600"/><rect x=".5" y="6" width="10" height="7.500" rx="1" fill="#e6e6e6"/><rect x="5" y="8.500" width="1.200" height="2.500" fill="#555"/></svg>
<span class="t" style="left:174px;top:330px">Fläche:</span>
<div class="fld" style="left:213px;top:328px;width:41px;height:17px;line-height:16px;font-size:11px;border-radius:2px 0 0 2px">100%</div>
<div class="dd" style="left:253px;top:328px;width:18px;height:17px;border-radius:0 3px 3px 0"></div>
<svg class="abs" style="left:259px;top:335px" width="7" height="4" viewBox="0 0 7 4"><path d="M0 0h7L3.500 4z" fill="#eee"/></svg>
<i class="abs" style="left:0;top:352px;width:265px;height:1px;background:#383838"></i>
<i class="abs" style="left:31px;top:353px;width:234px;height:62px;background:#6a7890"></i>
<i class="abs" style="left:30px;top:353px;width:1px;height:264px;background:#3f3f3f"></i>
<svg class="abs" style="left:8px;top:377.5px" width="15" height="11" viewBox="0 0 15 11"><path d="M.5 5.500C3 1.500 12 1.500 14.500 5.500 12 9.500 3 9.500.5 5.500z" fill="#dcdcdc"/><circle cx="7.500" cy="5.200" r="2.700" fill="#4a4a4a"/><circle cx="6.700" cy="4.300" r=".9" fill="#ddd"/></svg>
<svg class="abs" style="left:35px;top:380px" width="9" height="7" viewBox="0 0 9 7"><path d="M.5.500h8l-4 6z" fill="#f0f0f0"/></svg>
<svg class="abs" style="left:46px;top:378px" width="18" height="13" viewBox="0 0 18 13"><path d="M1 12V1.800C1 1 1.500.5 2.200.5h3.300L7 2h7c.7 0 1.200.5 1.200 1.200V5" fill="#c8ccd2" stroke="#c8ccd2" stroke-width=".5"/><path d="M3.500 5h14L15 12.500H1z" fill="#e4e6ea"/></svg>
<svg class="abs" style="left:78px;top:354px" width="44" height="60" viewBox="0 0 44 60"><rect x="2" y="2" width="40" height="56" fill="#000"/><path d="M22 8c3.800 0 6.300 2.900 6.300 7.200 0 2.200-.6 4.200-1.600 5.800.7 1.800 2.100 3.100 4.700 4.100 3.600 1.400 5 3.900 5 8v5.300c0 2.700-1.100 4.500-3.600 5.400V56H11.200V43.800c-2.500-.9-3.600-2.700-3.600-5.400v-5.300c0-4.100 1.400-6.600 5-8 2.600-1 4-2.300 4.700-4.100-1-1.600-1.600-3.600-1.600-5.800C15.700 10.900 18.200 8 22 8z" fill="#fff"/><rect x="27" y="20" width="5" height="1.800" fill="#fff"/><path d="M.5 20V.5h14M29.500.5h14V20M43.500 41v18.500h-14M14.500 59.500h-14V41" fill="none" stroke="#fff" stroke-width="1"/></svg>
<span class="t" style="left:127px;top:379px">Person</span>
<svg class="abs" style="left:236px;top:379px" width="13" height="12" viewBox="0 0 13 12"><rect x="3.500" y=".5" width="9" height="8" fill="#7d8aa0" stroke="#e6e6e6" stroke-width="1"/><rect x=".5" y="3" width="9" height="8" fill="#8996ab" stroke="#e6e6e6" stroke-width="1"/><rect x="3.500" y="3" width="6" height="5.500" fill="#b8c0cc"/></svg>
<i class="abs" style="left:0;top:415px;width:265px;height:1px;background:#3f3f3f"></i>
<svg class="abs" style="left:8px;top:421.0px" width="15" height="11" viewBox="0 0 15 11"><path d="M.5 5.500C3 1.500 12 1.500 14.500 5.500 12 9.500 3 9.500.5 5.500z" fill="#dcdcdc"/><circle cx="7.500" cy="5.200" r="2.700" fill="#4a4a4a"/><circle cx="6.700" cy="4.300" r=".9" fill="#ddd"/></svg>
<svg class="abs" style="left:63px;top:423px" width="7" height="9" viewBox="0 0 7 9"><path d="M.5.500l6 4-6 4z" fill="#f0f0f0"/></svg>
<svg class="abs" style="left:76px;top:421px" width="15" height="12" viewBox="0 0 15 12"><path d="M0 1.500C0 .7.500 0 1.300 0h3.500l1.400 1.600H13.700c.8 0 1.300.5 1.300 1.300V12H0z" fill="url(#fg)"/><path d="M0 3.200h15" stroke="#bdbdbd" stroke-width=".6"/></svg>
<span class="t" style="left:101px;top:422.0px">Augen</span>
<i class="abs" style="left:0;top:438px;width:265px;height:1px;background:#3f3f3f"></i>
<svg class="abs" style="left:8px;top:444.0px" width="15" height="11" viewBox="0 0 15 11"><path d="M.5 5.500C3 1.500 12 1.500 14.500 5.500 12 9.500 3 9.500.5 5.500z" fill="#dcdcdc"/><circle cx="7.500" cy="5.200" r="2.700" fill="#4a4a4a"/><circle cx="6.700" cy="4.300" r=".9" fill="#ddd"/></svg>
<svg class="abs" style="left:63px;top:446px" width="7" height="9" viewBox="0 0 7 9"><path d="M.5.500l6 4-6 4z" fill="#f0f0f0"/></svg>
<svg class="abs" style="left:76px;top:444px" width="15" height="12" viewBox="0 0 15 12"><path d="M0 1.500C0 .7.500 0 1.300 0h3.500l1.400 1.600H13.700c.8 0 1.300.5 1.300 1.300V12H0z" fill="url(#fg)"/><path d="M0 3.200h15" stroke="#bdbdbd" stroke-width=".6"/></svg>
<span class="t" style="left:101px;top:445.0px">Gluht</span>
<i class="abs" style="left:0;top:461px;width:265px;height:1px;background:#3f3f3f"></i>
<svg class="abs" style="left:8px;top:467.0px" width="15" height="11" viewBox="0 0 15 11"><path d="M.5 5.500C3 1.500 12 1.500 14.500 5.500 12 9.500 3 9.500.5 5.500z" fill="#dcdcdc"/><circle cx="7.500" cy="5.200" r="2.700" fill="#4a4a4a"/><circle cx="6.700" cy="4.300" r=".9" fill="#ddd"/></svg>
<svg class="abs" style="left:63px;top:469px" width="7" height="9" viewBox="0 0 7 9"><path d="M.5.500l6 4-6 4z" fill="#f0f0f0"/></svg>
<svg class="abs" style="left:76px;top:467px" width="15" height="12" viewBox="0 0 15 12"><path d="M0 1.500C0 .7.500 0 1.300 0h3.500l1.400 1.600H13.700c.8 0 1.300.5 1.300 1.300V12H0z" fill="url(#fg)"/><path d="M0 3.200h15" stroke="#bdbdbd" stroke-width=".6"/></svg>
<span class="t" style="left:101px;top:468.0px">Dodge and Burn</span>
<i class="abs" style="left:0;top:484px;width:265px;height:1px;background:#3f3f3f"></i>
<svg class="abs" style="left:8px;top:490.0px" width="15" height="11" viewBox="0 0 15 11"><path d="M.5 5.500C3 1.500 12 1.500 14.500 5.500 12 9.500 3 9.500.5 5.500z" fill="#dcdcdc"/><circle cx="7.500" cy="5.200" r="2.700" fill="#4a4a4a"/><circle cx="6.700" cy="4.300" r=".9" fill="#ddd"/></svg>
<svg class="abs" style="left:63px;top:492px" width="7" height="9" viewBox="0 0 7 9"><path d="M.5.500l6 4-6 4z" fill="#f0f0f0"/></svg>
<svg class="abs" style="left:76px;top:490px" width="15" height="12" viewBox="0 0 15 12"><path d="M0 1.500C0 .7.500 0 1.300 0h3.500l1.400 1.600H13.700c.8 0 1.300.5 1.300 1.300V12H0z" fill="url(#fg)"/><path d="M0 3.200h15" stroke="#bdbdbd" stroke-width=".6"/></svg>
<span class="t" style="left:101px;top:491.0px">Frequenztrennung (fein)</span>
<i class="abs" style="left:0;top:507px;width:265px;height:1px;background:#3f3f3f"></i>
<svg class="abs" style="left:8px;top:513.0px" width="15" height="11" viewBox="0 0 15 11"><path d="M.5 5.500C3 1.500 12 1.500 14.500 5.500 12 9.500 3 9.500.5 5.500z" fill="#dcdcdc"/><circle cx="7.500" cy="5.200" r="2.700" fill="#4a4a4a"/><circle cx="6.700" cy="4.300" r=".9" fill="#ddd"/></svg>
<svg class="abs" style="left:63px;top:515px" width="7" height="9" viewBox="0 0 7 9"><path d="M.5.500l6 4-6 4z" fill="#f0f0f0"/></svg>
<svg class="abs" style="left:76px;top:513px" width="15" height="12" viewBox="0 0 15 12"><path d="M0 1.500C0 .7.500 0 1.300 0h3.500l1.400 1.600H13.700c.8 0 1.300.5 1.300 1.300V12H0z" fill="url(#fg)"/><path d="M0 3.200h15" stroke="#bdbdbd" stroke-width=".6"/></svg>
<span class="t" style="left:101px;top:514.0px">Retusche</span>
<i class="abs" style="left:0;top:530px;width:265px;height:1px;background:#3f3f3f"></i>
<svg class="abs" style="left:8px;top:536.0px" width="15" height="11" viewBox="0 0 15 11"><path d="M.5 5.500C3 1.500 12 1.500 14.500 5.500 12 9.500 3 9.500.5 5.500z" fill="#dcdcdc"/><circle cx="7.500" cy="5.200" r="2.700" fill="#4a4a4a"/><circle cx="6.700" cy="4.300" r=".9" fill="#ddd"/></svg>
<svg class="abs" style="left:63px;top:538px" width="7" height="9" viewBox="0 0 7 9"><path d="M.5.500l6 4-6 4z" fill="#f0f0f0"/></svg>
<svg class="abs" style="left:76px;top:536px" width="15" height="12" viewBox="0 0 15 12"><path d="M0 1.500C0 .7.500 0 1.300 0h3.500l1.400 1.600H13.700c.8 0 1.300.5 1.300 1.300V12H0z" fill="url(#fg)"/><path d="M0 3.200h15" stroke="#bdbdbd" stroke-width=".6"/></svg>
<span class="t" style="left:101px;top:537.0px">Form</span>
<i class="abs" style="left:0;top:553px;width:265px;height:1px;background:#3f3f3f"></i>
<svg class="abs" style="left:8px;top:559.0px" width="15" height="11" viewBox="0 0 15 11"><path d="M.5 5.500C3 1.500 12 1.500 14.500 5.500 12 9.500 3 9.500.5 5.500z" fill="#dcdcdc"/><circle cx="7.500" cy="5.200" r="2.700" fill="#4a4a4a"/><circle cx="6.700" cy="4.300" r=".9" fill="#ddd"/></svg>
<svg class="abs" style="left:35px;top:561px" width="7" height="9" viewBox="0 0 7 9"><path d="M.5.500l6 4-6 4z" fill="#f0f0f0"/></svg>
<svg class="abs" style="left:48px;top:559px" width="15" height="12" viewBox="0 0 15 12"><path d="M0 1.500C0 .7.500 0 1.300 0h3.500l1.400 1.600H13.700c.8 0 1.300.5 1.300 1.300V12H0z" fill="url(#fg)"/><path d="M0 3.200h15" stroke="#bdbdbd" stroke-width=".6"/></svg>
<span class="t" style="left:73px;top:560.0px">Hintergrund</span>
<i class="abs" style="left:0;top:576px;width:265px;height:1px;background:#3f3f3f"></i>
<svg class="abs" style="left:8px;top:602.5px" width="15" height="11" viewBox="0 0 15 11"><path d="M.5 5.500C3 1.500 12 1.500 14.500 5.500 12 9.500 3 9.500.5 5.500z" fill="#dcdcdc"/><circle cx="7.500" cy="5.200" r="2.700" fill="#4a4a4a"/><circle cx="6.700" cy="4.300" r=".9" fill="#ddd"/></svg>
<svg class="abs" style="left:34px;top:580px" width="39" height="36" viewBox="0 0 39 36"><defs><radialGradient id="tg" cx=".5" cy=".42" r=".6"><stop offset="0" stop-color="#54303c"/><stop offset="1" stop-color="#33262a"/></radialGradient></defs><rect width="39" height="36" fill="#111"/><rect x="1" y="1" width="37" height="35" fill="url(#tg)"/><rect x="1" y="1" width="37" height="3" fill="#fff"/><g fill="#cfcfcf"><rect x="5" y="1" width="4" height="3"/><rect x="13" y="1" width="4" height="3"/><rect x="21" y="1" width="4" height="3"/><rect x="29" y="1" width="4" height="3"/></g><ellipse cx="19" cy="13" rx="4" ry="3.500" fill="#b83a58"/><ellipse cx="19.200" cy="17.500" rx="3" ry="3.800" fill="#a67a6c"/><path d="M15 12.500c2-2 6-2 8 0l-.3 2.500c-2-1.500-5.500-1.500-7.400 0z" fill="#c2405e"/><path d="M6 36c0-6 3-9.500 8-10.500l5 2.500 5-2.500c5 1 8 4.500 8 10.500z" fill="#0e0c0d"/><path d="M17 25h5l-2.500 3z" fill="#a67a6c"/><rect x="8" y="34.500" width="4" height="1.500" fill="#b89080"/><rect x="27" y="34" width="5" height="2" fill="#b89080"/></svg>
<span class="t" style="left:81px;top:603px">IMG_6045</span>
<i class="abs" style="left:265px;top:353px;width:15px;height:264px;background:#474747;border-left:1px solid #3e3e3e"></i>
<i class="abs" style="left:268px;top:356px;width:8px;height:234px;border-radius:4px;background:#787878"></i>
<i class="abs" style="left:0;top:617px;width:280px;height:19px;background:#4e4e4e;border-top:1px solid #3a3a3a"></i>
<svg class="abs" style="left:75px;top:623px" width="16" height="9" viewBox="0 0 16 9"><rect x="1" y="1" width="8" height="7" rx="3.500" fill="none" stroke="#b4b4b4" stroke-width="1.600"/><rect x="7" y="1" width="8" height="7" rx="3.500" fill="none" stroke="#b4b4b4" stroke-width="1.600"/></svg>
<span class="abs" style="left:104px;top:618px;font:italic 14px 'Liberation Sans',sans-serif;color:#e6e6e6;line-height:16px;letter-spacing:-.5px">fx</span>
<svg class="abs" style="left:118px;top:630px" width="4" height="3" viewBox="0 0 4 3"><path d="M0 0h4L2 3z" fill="#ddd"/></svg>
<i class="abs" style="left:131px;top:622px;width:14px;height:11px;background:#dedede"></i><i class="abs" style="left:135px;top:624px;width:6px;height:6px;border-radius:3px;background:#4a4a4a"></i>
<svg class="abs" style="left:158px;top:621px" width="16" height="14" viewBox="0 0 16 14"><circle cx="6" cy="6" r="5.200" fill="#d8d8d8"/><path d="M9.700 2.300A5.200 5.200 0 0 1 2.300 9.700z" fill="#555"/><circle cx="6" cy="6" r="5.200" fill="none" stroke="#e0e0e0" stroke-width="1"/><path d="M12 11h4l-2 3z" fill="#ddd"/></svg>
<svg class="abs" style="left:184px;top:621px" width="15" height="12" viewBox="0 0 15 12"><path d="M0 1.500C0 .7.500 0 1.300 0h3.500l1.400 1.600H13.700c.8 0 1.300.5 1.300 1.300V12H0z" fill="#dcdcdc"/><path d="M0 3.200h15" stroke="#bdbdbd" stroke-width=".6"/></svg>
<svg class="abs" style="left:212px;top:621px" width="12" height="13" viewBox="0 0 12 13"><path d="M.5.500h11v12H5l-4.500-4.500z" fill="#dedede"/><path d="M.5 8h4.500v4.500z" fill="#555"/><path d="M.5 8h4.500v4.500" fill="none" stroke="#4e4e4e" stroke-width="1"/></svg>
<svg class="abs" style="left:238px;top:620px" width="13" height="15" viewBox="0 0 13 15"><path d="M1 4h11M4.500 3.500V1.500h4v2" stroke="#dedede" stroke-width="1.400" fill="none"/><path d="M2 5.500h9l-.8 9H2.800z" fill="#dedede"/><path d="M4.700 7v6M6.500 7v6M8.300 7v6" stroke="#555" stroke-width=".9"/></svg>
</div>
<div id="bottom" class="abs"></div>
</body>
</html>
